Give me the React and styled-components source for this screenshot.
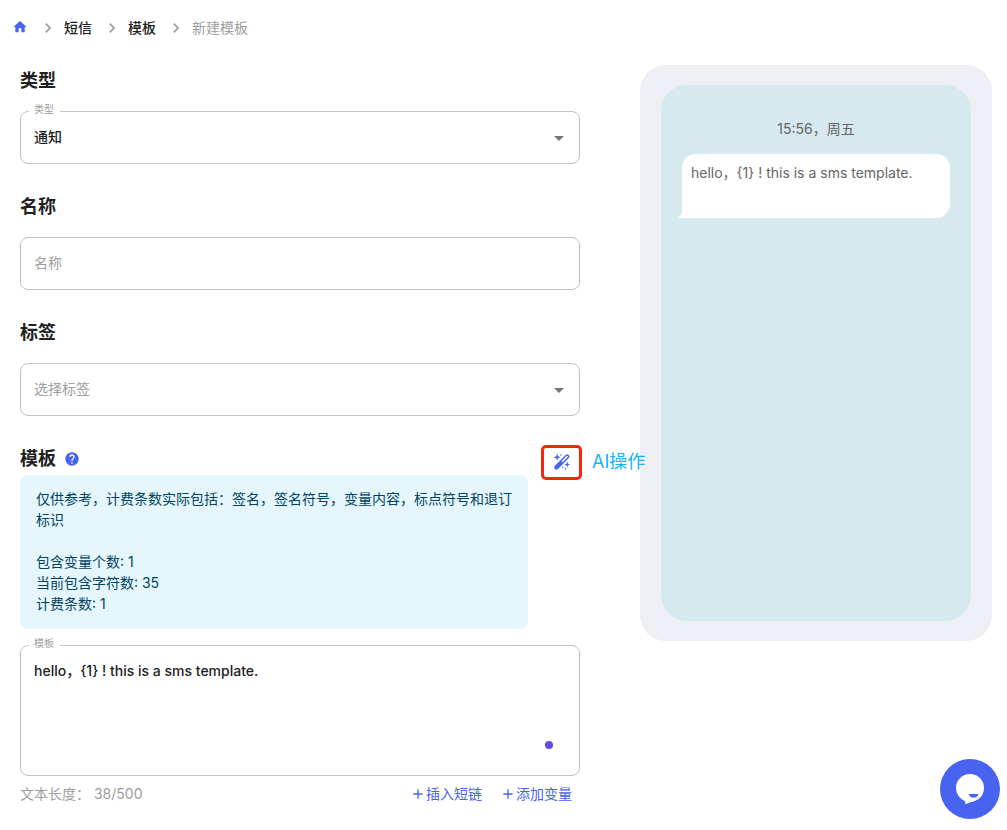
import React, { useState } from "react";
import styled, { createGlobalStyle, ThemeProvider } from "styled-components";
import { MdArrowDropDown, MdChevronRight, MdHelp, MdHome, MdAdd } from "react-icons/md";

const theme = {
    colors: {
        primary: "#4763f0",
        text: "#212121",
        muted: "#9e9e9e",
        border: "#c4c4c4",
        info: "#014361",
    },
};

const App = () => {
    const [template, setTemplate] = useState("hello，{1} ! this is a sms template.");

    return (
        <ThemeProvider theme={theme}>
            <GlobalStyle />
            <Breadcrumb aria-label="breadcrumb">
                <CrumbLink href="#home" aria-label="首页"><HomeIcon /></CrumbLink>
                <Separator />
                <CrumbLink href="#sms">短信</CrumbLink>
                <Separator />
                <CrumbLink href="#templates">模板</CrumbLink>
                <Separator />
                <CrumbCurrent>新建模板</CrumbCurrent>
            </Breadcrumb>
            <Content>
                <form>
                    <Section>
                        <Title>类型</Title>
                        <Field>
                            <FloatingLabel htmlFor="type">类型</FloatingLabel>
                            <Select id="type" defaultValue="notice">
                                <option value="notice">通知</option>
                            </Select>
                            <Arrow />
                        </Field>
                    </Section>
                    <Section>
                        <Title id="name-title">名称</Title>
                        <Field>
                            <Input type="text" placeholder="名称" aria-labelledby="name-title" />
                        </Field>
                    </Section>
                    <Section>
                        <Title id="tag-title">标签</Title>
                        <Field>
                            <Select $empty defaultValue="" aria-labelledby="tag-title">
                                <option value="">选择标签</option>
                            </Select>
                            <Arrow />
                        </Field>
                    </Section>
                    <TemplateHeader>
                        <Title>模板</Title>
                        <HelpIcon />
                        <AiAction>
                            <AiButton type="button" aria-label="AI操作"><MagicWand /></AiButton>
                            <AiText>AI操作</AiText>
                        </AiAction>
                    </TemplateHeader>
                    <Notice>
                        <p>仅供参考，计费条数实际包括：签名，签名符号，变量内容，标点符号和退订标识</p>
                        <br />
                        <p>包含变量个数: 1</p>
                        <p>当前包含字符数: 35</p>
                        <p>计费条数: 1</p>
                    </Notice>
                    <Field>
                        <FloatingLabel htmlFor="template">模板</FloatingLabel>
                        <TextArea id="template" value={template} onChange={e => setTemplate(e.target.value)} />
                        <Dot />
                    </Field>
                    <Footer>
                        <Counter>文本长度： 38/500</Counter>
                        <AddButton type="button"><PlusIcon />插入短链</AddButton>
                        <AddButton type="button"><PlusIcon />添加变量</AddButton>
                    </Footer>
                </form>
                <Phone>
                    <Screen>
                        <Time>15:56，周五</Time>
                        <Bubble>{template}</Bubble>
                    </Screen>
                </Phone>
            </Content>
            <ChatButton type="button" aria-label="在线客服"><ChatIcon /></ChatButton>
        </ThemeProvider>
    );
};

const MagicWand = () => (
    <svg width="18" height="18" viewBox="0 0 18 18" fill="currentColor" aria-hidden="true">
        <path d="M4.200.8l1 2.400 2.400 1-2.400 1-1 2.400-1-2.400-2.400-1 2.400-1z" />
        <path d="M14.200 8.600l.8 2.100 2.100.8-2.100.8-.8 2.100-.8-2.100-2.100-.8 2.100-.8z" />
        <path fillRule="evenodd" d="M12.700 2a2.200 2.200 0 0 1 3.100 0 2.200 2.200 0 0 1 0 3.100L5 15.900a2.200 2.200 0 0 1-3.100 0 2.200 2.200 0 0 1 0-3.100zM13.700 3L8.600 8.100l1.100 1.100 5.100-5.100a.75.75 0 0 0-1.100-1.100z" />
        <circle cx="7.800" cy="2" r=".7" />
        <circle cx="12.600" cy="16" r=".8" />
        <circle cx="9.800" cy="14.200" r=".8" />
    </svg>
);

const ChatIcon = () => (
    <svg width="60" height="60" viewBox="0 0 60 60" aria-hidden="true">
        <path fill="#fff" d="M30 15a14 14 0 0 1 14 14c0 8-6 13-13 14l-5.800 2.300v-3.100A14 14 0 0 1 16 29a14 14 0 0 1 14-14z" />
        <path fill="#4763f0" d="M28.600 35h10c-1 2.600-2.800 3.800-5 3.800s-4-1.200-5-3.800z" />
    </svg>
);

const GlobalStyle = createGlobalStyle`
    * {
        box-sizing: border-box;
    }
    body {
        margin: 0;
        background-color: #fff;
        color: #212121;
    }
    body, input, select, textarea, button {
        font-family: Inter, "Noto Sans CJK SC", sans-serif;
        font-size: 14px;
        line-height: 21px;
    }
    p {
        margin: 0;
    }
`;

const Breadcrumb = styled.nav`
    display: flex;
    align-items: center;
    height: 56px;
    padding: 0 12px;
`;

const CrumbLink = styled.a`
    display: flex;
    padding-bottom: 2px;
    color: ${props => props.theme.colors.text};
    font-weight: 500;
    text-decoration: none;
`;

const CrumbCurrent = styled.span`
    padding-bottom: 2px;
    color: ${props => props.theme.colors.muted};
`;

const HomeIcon = styled(MdHome)`
    width: 16px;
    height: 16px;
    color: ${props => props.theme.colors.primary};
`;

const Separator = styled(MdChevronRight)`
    width: 20px;
    height: 20px;
    margin: 0 6px 0 10px;
    color: ${props => props.theme.colors.muted};
`;

const Content = styled.main`
    display: grid;
    grid-template-columns: 1fr 352px;
    align-items: start;
    gap: 60px;
    padding: 8px 15px 20px 20px;
`;

const Section = styled.section`
    margin-bottom: 26px;
`;

const Title = styled.h2`
    margin: 0;
    font-size: 18px;
    font-weight: 600;
    line-height: 33px;
`;

const Field = styled.div`
    position: relative;
    display: grid;
    border: 1px solid ${props => props.theme.colors.border};
    border-radius: 8px;

    ${Title} + & {
        margin-top: 14px;
    }
`;

const FloatingLabel = styled.label`
    position: absolute;
    top: -11px;
    left: 8px;
    padding: 0 6px 0 5px;
    background-color: #fff;
    color: ${props => props.theme.colors.muted};
    font-size: 10px;
    line-height: 16px;
`;

const Select = styled.select`
    grid-area: 1 / 1;
    height: 51px;
    padding: 0 40px 2px 13px;
    border: 0;
    border-radius: 8px;
    outline: 0;
    appearance: none;
    background-color: transparent;
    color: ${props => props.$empty ? props.theme.colors.muted : props.theme.colors.text};
    font-weight: ${props => props.$empty ? 400 : 500};
`;

const Arrow = styled(MdArrowDropDown)`
    grid-area: 1 / 1;
    place-self: center end;
    width: 24px;
    height: 24px;
    margin-right: 8px;
    color: #757575;
    pointer-events: none;
`;

const Input = styled.input`
    height: 51px;
    padding: 0 13px 2px;
    border: 0;
    border-radius: 8px;
    outline: 0;
    background-color: transparent;

    &::placeholder {
        color: ${props => props.theme.colors.muted};
        opacity: 1;
    }
`;

const TextArea = styled.textarea`
    grid-area: 1 / 1;
    height: 129px;
    padding: 14px 13px;
    border: 0;
    border-radius: 8px;
    outline: 0;
    resize: none;
    background-color: transparent;
    color: ${props => props.theme.colors.text};
    font-weight: 500;
`;

const Dot = styled.span`
    grid-area: 1 / 1;
    place-self: end;
    width: 8px;
    height: 8px;
    margin: 0 26px 26px 0;
    border-radius: 50%;
    background-color: #6a48e0;
`;

const TemplateHeader = styled.div`
    position: relative;
    display: flex;
    align-items: center;
    gap: 8px;
`;

const HelpIcon = styled(MdHelp)`
    width: 16px;
    height: 16px;
    color: ${props => props.theme.colors.primary};
`;

const AiAction = styled.div`
    position: absolute;
    top: 3px;
    left: calc(100% - 39px);
    z-index: 1;
    display: flex;
    align-items: center;
    gap: 10px;
`;

const AiButton = styled.button`
    display: flex;
    align-items: center;
    justify-content: center;
    width: 41px;
    height: 35px;
    padding: 0 0 2px;
    border: 3px solid #fb2310;
    border-radius: 5px;
    background-color: #fff;
    color: ${props => props.theme.colors.primary};
`;

const AiText = styled.span`
    padding-bottom: 2px;
    color: #12b5f5;
    font-size: 18px;
    white-space: nowrap;
`;

const Notice = styled.div`
    margin: 0 52px 16px 0;
    padding: 13px 16px 15px;
    border-radius: 8px;
    background-color: #e5f6fd;
    color: ${props => props.theme.colors.info};
`;

const Footer = styled.div`
    display: flex;
    align-items: center;
    gap: 18px;
    padding: 7px 8px 0 0;
`;

const Counter = styled.span`
    margin-right: auto;
    color: ${props => props.theme.colors.muted};
`;

const AddButton = styled.button`
    display: flex;
    align-items: center;
    padding: 0;
    border: 0;
    background: none;
    color: ${props => props.theme.colors.primary};
`;

const PlusIcon = styled(MdAdd)`
    width: 16px;
    height: 16px;
`;

const Phone = styled.aside`
    margin-top: 1px;
    padding: 20px 21px;
    border-radius: 26px;
    background-color: #eeeff5;
`;

const Screen = styled.div`
    min-height: 536px;
    padding: 33px 21px;
    border-radius: 26px;
    background-color: #d5e9ef;
    color: #666;
`;

const Time = styled.p`
    margin-bottom: 15px;
    text-align: center;
`;

const Bubble = styled.div`
    position: relative;
    min-height: 64px;
    padding: 8px 9px;
    border-radius: 14px 14px 14px 0;
    background-color: #fff;

    &::before {
        content: "";
        position: absolute;
        bottom: 0;
        left: -4px;
        border-right: 4px solid #fff;
        border-top: 4px solid transparent;
    }
`;

const ChatButton = styled.button`
    position: fixed;
    right: 7px;
    bottom: 11px;
    width: 60px;
    height: 60px;
    padding: 0;
    border: 0;
    border-radius: 50%;
    background-color: ${props => props.theme.colors.primary};

    svg {
        display: block;
    }
`;

export default App;
